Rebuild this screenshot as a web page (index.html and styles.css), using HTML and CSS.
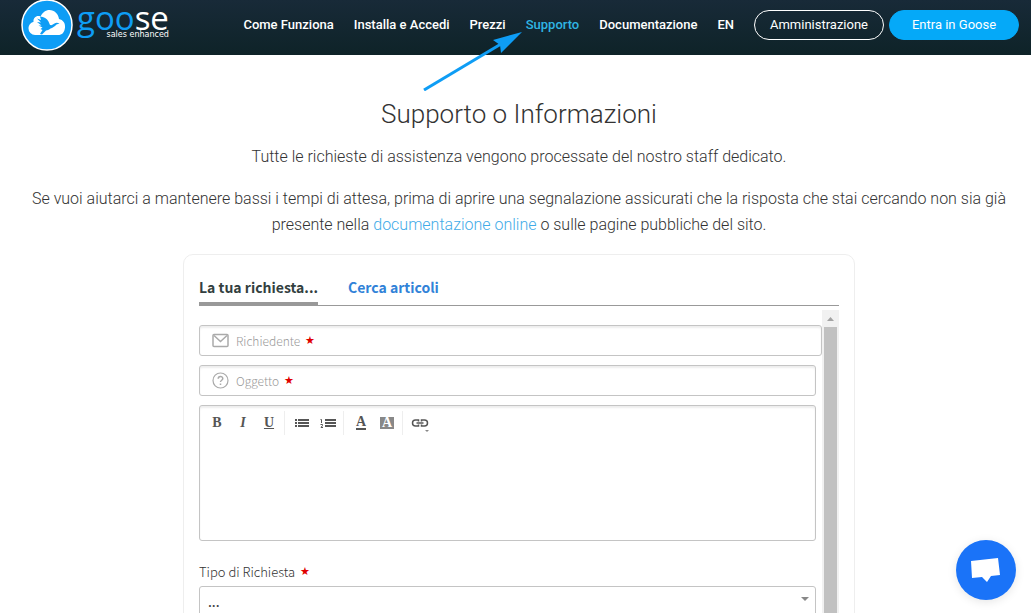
FILE: index.html
```
<!DOCTYPE html>
<html lang="it">
<head>
    <title>Goose - Supporto</title>
    <meta charset="utf-8">
    <meta name="viewport" content="width=device-width, initial-scale=1">
    <link rel="stylesheet" href="styles.css">
</head>

<body>
    <header class="header">
        <a class="logo" href="#">
            <svg class="logo-mark" viewBox="0 0 52 52" width="52" height="52" aria-hidden="true">
                <circle cx="26" cy="26" r="25" fill="#0e9df5" stroke="#fff" stroke-width="1.5"/>
                <path d="M14 36a6.500 6.500 0 0 1-6.500-6.500c0-3 2-6 5-6.500-.5-4 3-7 7-5.500 2-4 5-6.500 9-6.500 5 0 9 4 9.500 9 4 1 6.500 4 6 8.500-.5 5-3 7.500-7 7.500z" fill="#fff"/>
                <path d="M19 17.500c4 .5 7 2 8.500 5l1.500 3.500c2 .5 3-.5 4.500-1.500 1.500-1 3-1 5 0l-3 1c-2 2-4 3.500-6 4-2 1.500-3 1.500-4.500 2l-4 4-2-.5 2.500-4-2-1 2-1.500-4-2h3l-4.500-3.500 4 .5-4-4 4 1.500z" fill="#0e9df5"/>
            </svg>
            <span class="logo-text">
                <span class="logo-name"><span class="logo-blue">goo</span>se</span>
                <span class="logo-sub">sales enhanced</span>
            </span>
        </a>
        <nav class="nav">
            <a href="#">Come Funziona</a>
            <a href="#">Installa e Accedi</a>
            <a href="#">Prezzi</a>
            <a class="active" href="#">Supporto</a>
            <a href="#">Documentazione</a>
            <a href="#">EN</a>
        </nav>
        <div class="header-buttons">
            <button type="button" class="btn btn-outline">Amministrazione</button>
            <button type="button" class="btn btn-fill">Entra in Goose</button>
        </div>
        <svg class="arrow" viewBox="0 0 100 60" width="100" height="60" aria-hidden="true">
            <path d="M1 59L78 13" stroke="#0e9df5" stroke-width="3"/>
            <path d="M99 1L70 9L77 14L78 22Z" fill="#0e9df5"/>
        </svg>
    </header>

    <main class="main">
        <h1>Supporto o Informazioni</h1>
        <p>Tutte le richieste di assistenza vengono processate del nostro staff dedicato.</p>
        <p>Se vuoi aiutarci a mantenere bassi i tempi di attesa, prima di aprire una segnalazione assicurati che la risposta che stai cercando non sia già presente nella <a href="#">documentazione online</a> o sulle pagine pubbliche del sito.</p>

        <section class="card">
            <div class="tabs">
                <button type="button" class="tab selected">La tua richiesta...</button>
                <button type="button" class="tab">Cerca articoli</button>
            </div>
            <div class="scroll-area">
                <form class="form">
                    <div class="field field-wide">
                        <svg viewBox="0 0 17 17" width="17" height="17" fill="none" stroke="#aaa" stroke-width="1.5" aria-hidden="true">
                            <rect x="1" y="2.500" width="15" height="12" rx="1"/>
                            <path d="M2 3.500L8.500 9.500L15 3.500"/>
                        </svg>
                        <label for="requester">Richiedente</label>
                        <span class="required">★</span>
                        <input type="email" id="requester" name="requester">
                    </div>
                    <div class="field">
                        <svg viewBox="0 0 17 17" width="17" height="17" fill="none" stroke="#aaa" stroke-width="1.200" aria-hidden="true">
                            <circle cx="8.500" cy="8.500" r="7.500"/>
                            <path d="M6.200 6.800c0-3 4.600-3 4.600-.2 0 1.700-2.300 1.600-2.300 3.400M8.500 11.500v1.500" stroke-width="1.500"/>
                        </svg>
                        <label for="subject">Oggetto</label>
                        <span class="required">★</span>
                        <input type="text" id="subject" name="subject">
                    </div>
                    <div class="editor">
                        <div class="toolbar">
                            <div class="tool-group">
                                <button type="button" class="tool"><b>B</b></button>
                                <button type="button" class="tool"><i>I</i></button>
                                <button type="button" class="tool"><u>U</u></button>
                            </div>
                            <div class="tool-group">
                                <button type="button" class="tool" aria-label="Elenco puntato">
                                    <svg viewBox="0 0 14 9" width="14" height="9" fill="#555">
                                        <path d="M0 0h2v2H0zM0 3h2v2H0zM0 6h2v2H0zM3 0h11v2H3zM3 3h11v2H3zM3 6h11v2H3z"/>
                                    </svg>
                                </button>
                                <button type="button" class="tool" aria-label="Elenco numerato">
                                    <svg viewBox="0 0 16 9" width="16" height="9">
                                        <path d="M5 0h11v2H5zM5 3h11v2H5zM5 6h11v2H5z" fill="#555"/>
                                        <path d="M.5 .5h1V4M.5 5.500h2v1l-1.500 2h2" fill="none" stroke="#555"/>
                                    </svg>
                                </button>
                            </div>
                            <div class="tool-group">
                                <button type="button" class="tool"><span class="text-color">A</span></button>
                                <button type="button" class="tool"><span class="back-color">A</span></button>
                            </div>
                            <div class="tool-group">
                                <button type="button" class="tool" aria-label="Link">
                                    <svg class="link-icon" viewBox="0 0 18 18" width="18" height="18">
                                        <path d="M7.500 10.500V12H4.500a3 3 0 0 1 0-6h3v1.500M10.500 7.500V6h3a3 3 0 0 1 0 6h-3v-1.500M5.500 9h7" fill="none" stroke="#555" stroke-width="1.500"/>
                                        <path d="M14 16h4l-2 2z" fill="#888"/>
                                    </svg>
                                </button>
                            </div>
                        </div>
                        <textarea name="message" aria-label="Messaggio"></textarea>
                    </div>
                    <div class="select-label">
                        <label for="type">Tipo di Richiesta</label>
                        <span class="required">★</span>
                    </div>
                    <div class="select-box">
                        <select id="type" name="type">
                            <option>...</option>
                        </select>
                    </div>
                </form>
                <div class="scrollbar" aria-hidden="true">
                    <div class="scroll-up"></div>
                    <div class="scroll-thumb"></div>
                </div>
            </div>
        </section>
    </main>

    <button type="button" class="chat" aria-label="Chat">
        <svg viewBox="0 0 30 26" width="30" height="26">
            <path d="M0 4L27 1L29 18L20 19L16 25L11 20L1 21Z" fill="#fff"/>
        </svg>
    </button>
</body>
</html>
```
FILE: styles.css
```
* {
    box-sizing: border-box;
}

body {
    margin: 0;
    height: 100vh;
    overflow: hidden;
    font-family: Roboto, sans-serif;
    color: #333;
    background-color: #fff;
}

button {
    font-family: inherit;
    cursor: pointer;
}

a {
    text-decoration: none;
}

/* header */
.header {
    position: relative;
    display: flex;
    align-items: center;
    height: 55px;
    padding: 0 12px 6px 21px;
    background: linear-gradient(#182a38, #0e2328);
}

.logo {
    display: flex;
    align-items: center;
    gap: 4px;
}

.logo-mark {
    display: block;
}

.logo-text {
    display: flex;
    flex-direction: column;
    padding-bottom: 6px;
    color: #fff;
}

.logo-name {
    font-family: "Open Sans", sans-serif;
    font-size: 33px;
    font-weight: 500;
    line-height: 26px;
}

.logo-blue {
    color: #0e9df5;
}

.logo-sub {
    font-family: "DejaVu Sans", sans-serif;
    font-size: 8px;
    line-height: 8px;
    text-align: right;
}

.nav {
    display: flex;
    gap: 20px;
    margin-left: auto;
    font-size: 13px;
    font-weight: 500;
    line-height: 20px;
    white-space: nowrap;
}

.nav a {
    color: #fff;
}

.nav .active {
    color: #2fb5e3;
}

.header-buttons {
    display: flex;
    gap: 5px;
    margin-left: 20px;
}

.btn {
    width: 130px;
    height: 30px;
    padding: 0;
    border: 1px solid #fff;
    border-radius: 15px;
    font-size: 13px;
    line-height: 26px;
    color: #fff;
    background: none;
}

.btn-fill {
    border-color: #05a9f8;
    background-color: #05a9f8;
}

.arrow {
    position: absolute;
    top: 31px;
    right: 508px;
}

/* content */
.main {
    padding: 44px 12px 0 19px;
    text-align: center;
}

h1 {
    margin: 0 0 15px;
    font-size: 26px;
    font-weight: 300;
    line-height: 30px;
}

p {
    margin: 0 0 16px;
    font-size: 16px;
    font-weight: 300;
    line-height: 26px;
}

p a {
    color: #3fabe8;
}

.card {
    max-width: 672px;
    margin: 0 auto;
    padding: 16px 15px;
    border: 1px solid #eee;
    border-radius: 10px;
    font-family: "Noto Sans CJK SC", sans-serif;
    text-align: left;
}

.tabs {
    display: flex;
    gap: 30px;
    height: 35px;
    border-bottom: 1px solid #999;
}

.tab {
    padding: 0;
    border: none;
    border-bottom: 3px solid transparent;
    font-size: 14px;
    font-weight: 700;
    color: #3182d8;
    background: none;
}

.tab.selected {
    border-color: #999;
    color: #333f3f;
}

.scroll-area {
    display: flex;
    padding-top: 4px;
}

.form {
    flex: 1;
    padding: 15px 6px 20px 0;
}

.field {
    display: flex;
    align-items: center;
    height: 31px;
    margin-bottom: 9px;
    padding: 0 12px;
    border: 1px solid #c4c4c4;
    border-radius: 3px;
    box-shadow: inset 0 2px 2px #eee;
    font-size: 12px;
    font-weight: 300;
    color: #999;
}

.field-wide {
    margin-right: -6px;
}

.field label {
    margin-left: 7px;
}

.field input {
    flex: 1;
    min-width: 0;
    padding: 0;
    border: none;
    outline: none;
    background: none;
    font: inherit;
}

.required {
    margin-left: 5px;
    font-family: "DejaVu Sans", sans-serif;
    font-size: 11px;
    color: #e00000;
}

.editor {
    height: 136px;
    border: 1px solid #c4c4c4;
    border-radius: 3px;
    box-shadow: inset 0 2px 2px #eee;
}

.toolbar {
    display: flex;
    padding: 5px 4px;
}

.tool-group {
    display: flex;
    margin-right: 4px;
    padding-right: 2px;
    border-right: 1px solid #eee;
}

.tool-group:last-child {
    border: none;
}

.tool {
    display: flex;
    align-items: center;
    justify-content: center;
    width: 26px;
    height: 24px;
    padding: 0;
    border: none;
    background: none;
    font-family: "Liberation Serif", serif;
    font-size: 14px;
    font-weight: bold;
    color: #555;
}

.text-color {
    border-bottom: 2px solid #555;
    line-height: 12px;
}

.back-color {
    width: 14px;
    line-height: 12px;
    color: #fff;
    background-color: #888;
}

.editor textarea {
    display: block;
    width: 100%;
    height: 90px;
    padding: 0 12px;
    border: none;
    outline: none;
    resize: none;
    background: none;
    font: inherit;
}

.select-label {
    display: flex;
    align-items: center;
    margin: 21px 0 4px;
    font-size: 13px;
    font-weight: 300;
    line-height: 20px;
}

.select-box {
    position: relative;
}

.select-box::after {
    content: "";
    position: absolute;
    top: 11px;
    right: 7px;
    border: 4px solid transparent;
    border-top-color: #888;
    border-bottom: none;
}

.select-box select {
    appearance: none;
    width: 100%;
    height: 31px;
    padding: 0 8px;
    border: 1px solid #c4c4c4;
    border-radius: 3px;
    background: none;
    font: 500 13px "Noto Sans CJK SC", sans-serif;
    color: #444;
}

.scrollbar {
    width: 17px;
    padding: 0 2px;
    background-color: #f1f1f1;
}

.scroll-up {
    width: 7px;
    height: 17px;
    margin: 0 auto;
    background-color: #a3a3a3;
    clip-path: polygon(50% 7px, 100% 11px, 0 11px);
}

.scroll-thumb {
    height: 100%;
    background-color: #c1c1c1;
}

/* chat */
.chat {
    position: fixed;
    right: 15px;
    bottom: 13px;
    display: flex;
    align-items: center;
    justify-content: center;
    width: 60px;
    height: 60px;
    padding: 0;
    border: none;
    border-radius: 50%;
    background-color: #1a73f8;
    box-shadow: 0 2px 10px rgba(0,0,0,.1);
}
```
